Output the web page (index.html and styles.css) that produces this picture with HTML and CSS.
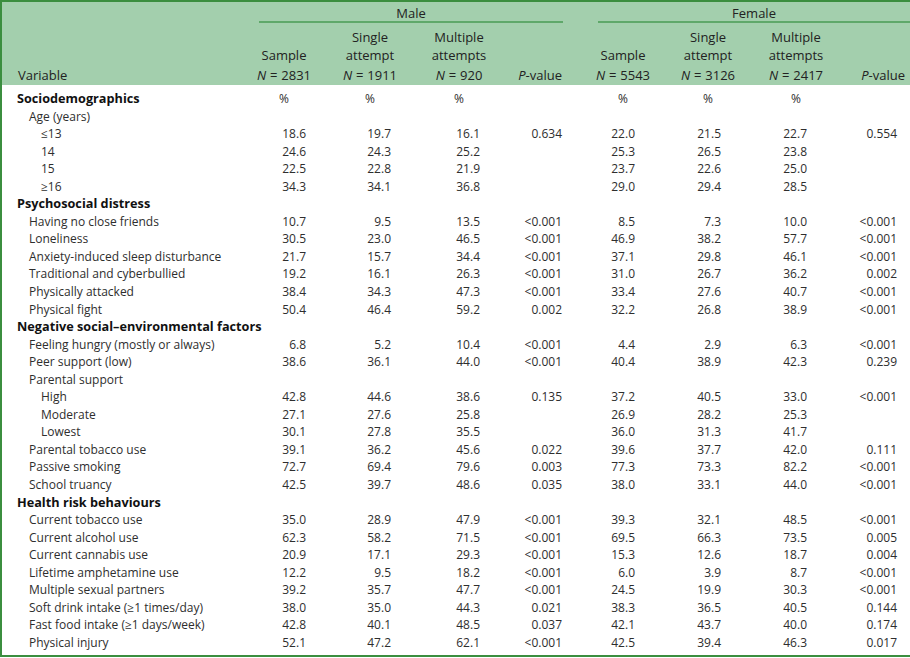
FILE: index.html
```html
<!DOCTYPE html>
<html lang="en">
<head>
<meta charset="utf-8">
<title>Table</title>
<link rel="stylesheet" href="styles.css">
</head>
<body>
<table class="tbl">
  <colgroup>
    <col class="c0"><col class="c1"><col class="c2"><col class="c3"><col class="c4"><col class="c5"><col class="c6"><col class="c7"><col class="c8">
  </colgroup>
  <thead>
    <tr class="h1">
      <th class="var" rowspan="3">Variable</th>
      <th colspan="4" class="grp"><div class="grp-label male">Male</div></th>
      <th colspan="4" class="grp"><div class="grp-label female">Female</div></th>
    </tr>
    <tr class="h2">
      <th>Sample</th><th>Single<br>attempt</th><th>Multiple<br>attempts</th><th></th>
      <th>Sample</th><th>Single<br>attempt</th><th>Multiple<br>attempts</th><th></th>
    </tr>
    <tr class="h3">
      <th><i>N</i> = 2831</th><th><i>N</i> = 1911</th><th><i>N</i> = 920</th><th class="pv-m"><i>P</i>-value</th>
      <th><i>N</i> = 5543</th><th><i>N</i> = 3126</th><th><i>N</i> = 2417</th><th class="pv-f"><i>P</i>-value</th>
    </tr>
  </thead>
  <tbody>
    <tr class="first"><td class="sec">Sociodemographics</td><td class="pct">%</td><td class="pct">%</td><td class="pct">%</td><td></td><td class="pct">%</td><td class="pct">%</td><td class="pct">%</td><td></td></tr>
    <tr><td class="l1">Age (years)</td><td></td><td></td><td></td><td></td><td></td><td></td><td></td><td></td></tr>
    <tr><td class="l2">≤13</td><td>18.6</td><td>19.7</td><td>16.1</td><td>0.634</td><td>22.0</td><td>21.5</td><td>22.7</td><td>0.554</td></tr>
    <tr><td class="l2">14</td><td>24.6</td><td>24.3</td><td>25.2</td><td></td><td>25.3</td><td>26.5</td><td>23.8</td><td></td></tr>
    <tr><td class="l2">15</td><td>22.5</td><td>22.8</td><td>21.9</td><td></td><td>23.7</td><td>22.6</td><td>25.0</td><td></td></tr>
    <tr><td class="l2">≥16</td><td>34.3</td><td>34.1</td><td>36.8</td><td></td><td>29.0</td><td>29.4</td><td>28.5</td><td></td></tr>
    <tr><td class="sec">Psychosocial distress</td><td></td><td></td><td></td><td></td><td></td><td></td><td></td><td></td></tr>
    <tr><td class="l1">Having no close friends</td><td>10.7</td><td>9.5</td><td>13.5</td><td>&lt;0.001</td><td>8.5</td><td>7.3</td><td>10.0</td><td>&lt;0.001</td></tr>
    <tr><td class="l1">Loneliness</td><td>30.5</td><td>23.0</td><td>46.5</td><td>&lt;0.001</td><td>46.9</td><td>38.2</td><td>57.7</td><td>&lt;0.001</td></tr>
    <tr><td class="l1">Anxiety-induced sleep disturbance</td><td>21.7</td><td>15.7</td><td>34.4</td><td>&lt;0.001</td><td>37.1</td><td>29.8</td><td>46.1</td><td>&lt;0.001</td></tr>
    <tr><td class="l1">Traditional and cyberbullied</td><td>19.2</td><td>16.1</td><td>26.3</td><td>&lt;0.001</td><td>31.0</td><td>26.7</td><td>36.2</td><td>0.002</td></tr>
    <tr><td class="l1">Physically attacked</td><td>38.4</td><td>34.3</td><td>47.3</td><td>&lt;0.001</td><td>33.4</td><td>27.6</td><td>40.7</td><td>&lt;0.001</td></tr>
    <tr><td class="l1">Physical fight</td><td>50.4</td><td>46.4</td><td>59.2</td><td>0.002</td><td>32.2</td><td>26.8</td><td>38.9</td><td>&lt;0.001</td></tr>
    <tr><td class="sec">Negative social–environmental factors</td><td></td><td></td><td></td><td></td><td></td><td></td><td></td><td></td></tr>
    <tr><td class="l1">Feeling hungry (mostly or always)</td><td>6.8</td><td>5.2</td><td>10.4</td><td>&lt;0.001</td><td>4.4</td><td>2.9</td><td>6.3</td><td>&lt;0.001</td></tr>
    <tr><td class="l1">Peer support (low)</td><td>38.6</td><td>36.1</td><td>44.0</td><td>&lt;0.001</td><td>40.4</td><td>38.9</td><td>42.3</td><td>0.239</td></tr>
    <tr><td class="l1">Parental support</td><td></td><td></td><td></td><td></td><td></td><td></td><td></td><td></td></tr>
    <tr><td class="l2">High</td><td>42.8</td><td>44.6</td><td>38.6</td><td>0.135</td><td>37.2</td><td>40.5</td><td>33.0</td><td>&lt;0.001</td></tr>
    <tr><td class="l2">Moderate</td><td>27.1</td><td>27.6</td><td>25.8</td><td></td><td>26.9</td><td>28.2</td><td>25.3</td><td></td></tr>
    <tr><td class="l2">Lowest</td><td>30.1</td><td>27.8</td><td>35.5</td><td></td><td>36.0</td><td>31.3</td><td>41.7</td><td></td></tr>
    <tr><td class="l1">Parental tobacco use</td><td>39.1</td><td>36.2</td><td>45.6</td><td>0.022</td><td>39.6</td><td>37.7</td><td>42.0</td><td>0.111</td></tr>
    <tr><td class="l1">Passive smoking</td><td>72.7</td><td>69.4</td><td>79.6</td><td>0.003</td><td>77.3</td><td>73.3</td><td>82.2</td><td>&lt;0.001</td></tr>
    <tr><td class="l1">School truancy</td><td>42.5</td><td>39.7</td><td>48.6</td><td>0.035</td><td>38.0</td><td>33.1</td><td>44.0</td><td>&lt;0.001</td></tr>
    <tr><td class="sec">Health risk behaviours</td><td></td><td></td><td></td><td></td><td></td><td></td><td></td><td></td></tr>
    <tr><td class="l1">Current tobacco use</td><td>35.0</td><td>28.9</td><td>47.9</td><td>&lt;0.001</td><td>39.3</td><td>32.1</td><td>48.5</td><td>&lt;0.001</td></tr>
    <tr><td class="l1">Current alcohol use</td><td>62.3</td><td>58.2</td><td>71.5</td><td>&lt;0.001</td><td>69.5</td><td>66.3</td><td>73.5</td><td>0.005</td></tr>
    <tr><td class="l1">Current cannabis use</td><td>20.9</td><td>17.1</td><td>29.3</td><td>&lt;0.001</td><td>15.3</td><td>12.6</td><td>18.7</td><td>0.004</td></tr>
    <tr><td class="l1">Lifetime amphetamine use</td><td>12.2</td><td>9.5</td><td>18.2</td><td>&lt;0.001</td><td>6.0</td><td>3.9</td><td>8.7</td><td>&lt;0.001</td></tr>
    <tr><td class="l1">Multiple sexual partners</td><td>39.2</td><td>35.7</td><td>47.7</td><td>&lt;0.001</td><td>24.5</td><td>19.9</td><td>30.3</td><td>&lt;0.001</td></tr>
    <tr><td class="l1">Soft drink intake (≥1 times/day)</td><td>38.0</td><td>35.0</td><td>44.3</td><td>0.021</td><td>38.3</td><td>36.5</td><td>40.5</td><td>0.144</td></tr>
    <tr><td class="l1">Fast food intake (≥1 days/week)</td><td>42.8</td><td>40.1</td><td>48.5</td><td>0.037</td><td>42.1</td><td>43.7</td><td>40.0</td><td>0.174</td></tr>
    <tr class="last"><td class="l1">Physical injury</td><td>52.1</td><td>47.2</td><td>62.1</td><td>&lt;0.001</td><td>42.5</td><td>39.4</td><td>46.3</td><td>0.017</td></tr>
  </tbody>
</table>
</body>
</html>
```
FILE: styles.css
```css
html, body {
  margin: 0;
  padding: 0;
  background: #ffffff;
}
body {
  font-family: "Open Sans", "DejaVu Sans", sans-serif;
  font-size: 12px;
  color: #2e2e2e;
}
.tbl {
  width: 910px;
  table-layout: fixed;
  border-collapse: separate;
  border-spacing: 0;
  border-top: 2px solid #3b8e3f;
  border-left: 2px solid #3b8e3f;
  border-bottom: 2px solid #3b8e3f;
}
.c0 { width: 248px; }
.c1 { width: 68px; }
.c2 { width: 104px; }
.c3 { width: 74px; }
.c4 { width: 94px; }
.c5 { width: 66px; }
.c6 { width: 104px; }
.c7 { width: 72px; }
.c8 { width: 78px; }

thead th {
  background: #a3cfad;
  font-weight: 400;
  font-size: 13px;
  color: #222;
  padding: 0;
  text-align: center;
  white-space: nowrap;
}
thead th i { font-style: italic; }
.h3 th { word-spacing: 0.5px; }
.var {
  text-align: left;
  vertical-align: bottom;
  padding: 0 0 1px 16px;
  line-height: 18px;
}
.h1 .grp {
  padding-top: 4px;
  vertical-align: top;
}
.grp-label {
  line-height: 15px;
  border-bottom: 2px solid #5fa86a;
  text-align: center;
}
.grp-label.male { margin: 0 27px 0 9px; }
.grp-label.female { margin: 0 0 0 8px; }
.h2 th {
  line-height: 18px;
  padding-top: 5px;
  vertical-align: bottom;
}
.h3 th {
  line-height: 18px;
  padding-top: 2px;
  padding-bottom: 1px;
}
.h3 .pv-m { text-align: right; padding-right: 28px; }
.h3 .pv-f { text-align: right; padding-right: 5px; }

tbody td {
  padding: 0;
  line-height: 17.55px;
  text-align: right;
  white-space: nowrap;
}
tbody tr.first td { padding-top: 5px; }
tbody tr.last td { padding-bottom: 3px; }
tbody td:nth-child(2) { padding-right: 12px; }
tbody td:nth-child(3) { padding-right: 31px; }
tbody td:nth-child(4) { padding-right: 16px; }
tbody td:nth-child(5) { padding-right: 28px; }
tbody td:nth-child(6) { padding-right: 21px; }
tbody td:nth-child(7) { padding-right: 39px; }
tbody td:nth-child(8) { padding-right: 25px; }
tbody td:nth-child(9) { padding-right: 13px; }
tbody td.pct { text-align: center; padding-right: 0; }
tbody td.sec {
  text-align: left;
  font-weight: 700;
  font-size: 12.7px;
  color: #111;
  padding-left: 15px;
}
tbody td.l1 { text-align: left; padding-left: 27px; }
tbody td.l2 { text-align: left; padding-left: 39px; }
```
